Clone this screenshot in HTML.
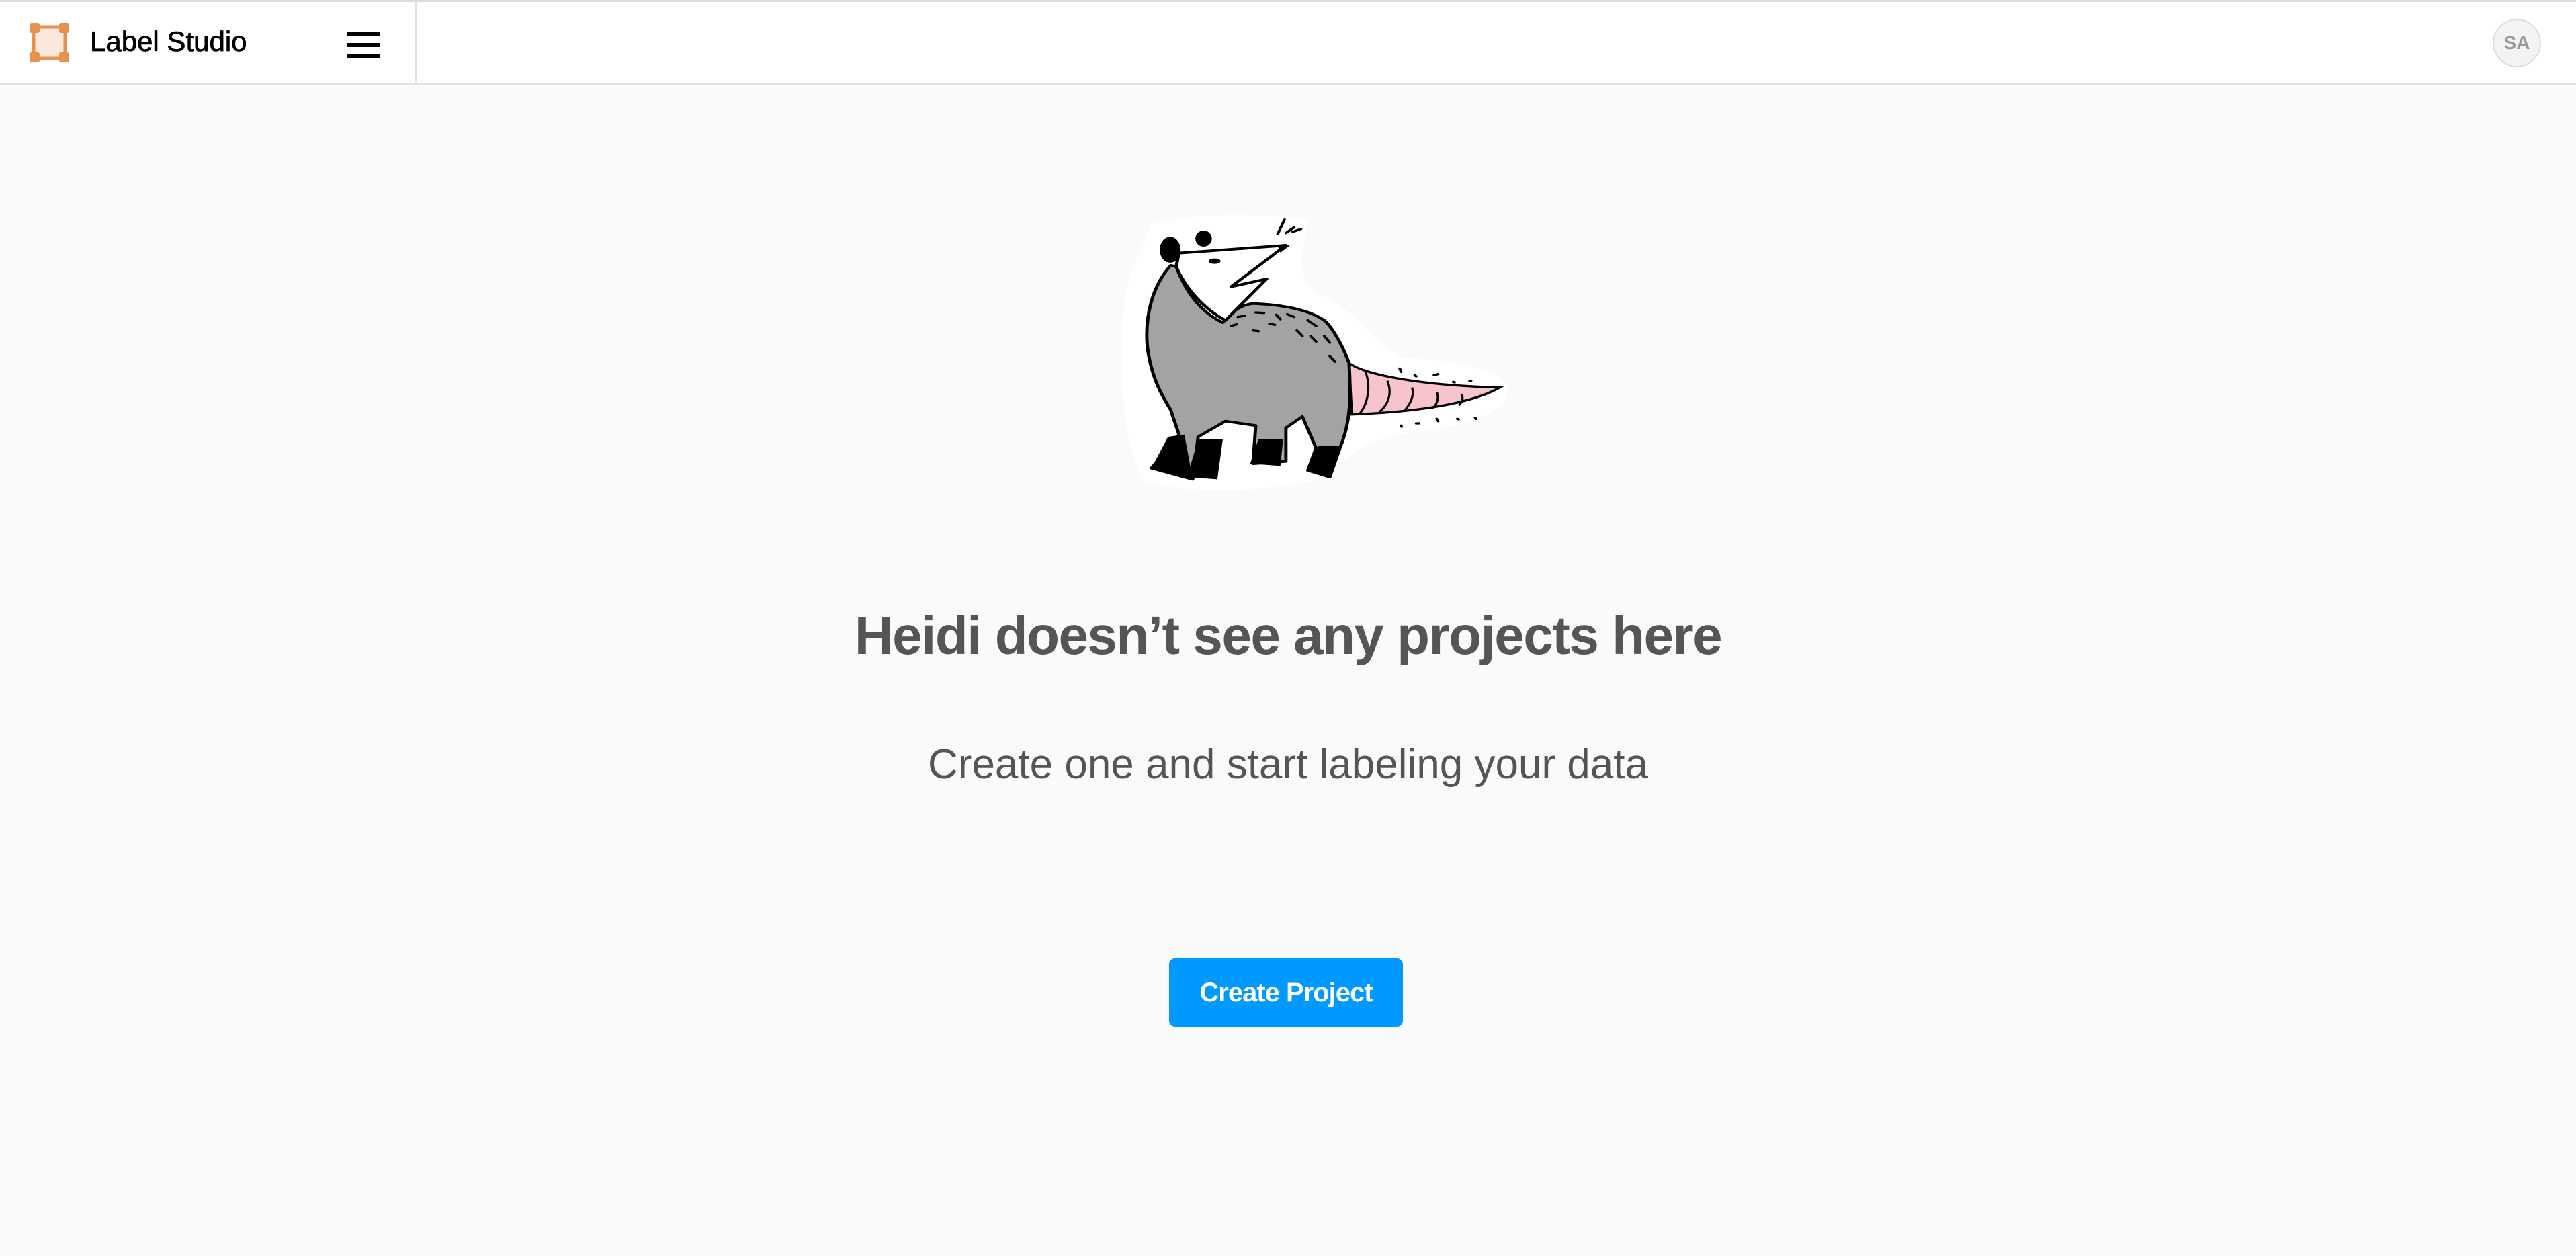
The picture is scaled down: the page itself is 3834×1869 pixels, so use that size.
<!DOCTYPE html>
<html><head><meta charset="utf-8"><style>
*{margin:0;padding:0;box-sizing:border-box}
html,body{width:3834px;height:1869px;overflow:hidden;background:#fafafa;font-family:"Liberation Sans",sans-serif}
.top{position:absolute;left:0;top:0;width:3834px;height:3px;background:#dcdcdc}
.hdr{position:absolute;left:0;top:3px;width:3834px;height:124px;background:#fff;border-bottom:3px solid #e3e3e3}
.div{position:absolute;left:618px;top:3px;width:3px;height:124px;background:#e3e3e3}
.logo{position:absolute;left:44px;top:34px}
.brand{position:absolute;left:134px;top:38px;font-size:42px;color:#000;-webkit-text-stroke:0.8px #000}
.ham{position:absolute;left:516px;top:48px;width:49px}
.ham i{display:block;height:6px;background:#000;margin-bottom:10px}
.av{position:absolute;left:3710px;top:28px;width:72px;height:72px;border-radius:50%;background:#f3f3f3;border:2px solid #ddd;color:#9a9a9a;font-weight:bold;font-size:28px;text-align:center;line-height:68px}
h1{position:absolute;left:0;width:3834px;top:900px;text-align:center;font-size:80px;font-weight:bold;color:#555;letter-spacing:-1.5px}
.sub{position:absolute;left:0;width:3834px;top:1102px;text-align:center;font-size:62px;color:#555}
.btn{position:absolute;left:1740px;top:1426px;width:348px;height:102px;border-radius:9px;background:#0099ff;color:#fff;font-size:40px;font-weight:bold;text-align:center;line-height:102px;letter-spacing:-1px}
</style></head><body>
<div class="top"></div>
<div class="hdr"></div>
<div class="div"></div>
<svg class="logo" width="59" height="59" viewBox="0 0 59 59"><rect x="6" y="6" width="47" height="47" fill="#fbe8dc" stroke="#e8924f" stroke-width="5"/><rect x="0" y="0" width="15" height="15" rx="3" fill="#e8924f"/><rect x="44" y="0" width="15" height="15" rx="3" fill="#e8924f"/><rect x="0" y="44" width="15" height="15" rx="3" fill="#e8924f"/><rect x="44" y="44" width="15" height="15" rx="3" fill="#e8924f"/></svg>
<div class="brand">Label Studio</div>
<div class="ham"><i></i><i></i><i></i></div>
<div class="av">SA</div>
<svg style="position:absolute;left:1620px;top:300px" width="640" height="450" viewBox="0 0 1568 1350" preserveAspectRatio="none">
<path d="M230 100 C400 40 700 60 800 80 C780 250 740 330 850 420 C1000 500 1050 650 1150 700 C1350 700 1530 760 1530 840 C1500 1000 1300 1000 1100 1050 C950 1100 900 1200 820 1250 C600 1300 350 1300 200 1250 C100 1000 100 500 160 300 Z" fill="#fff"/>
<path d="M950 720 C1000 770 1200 820 1500 830 C1400 900 1200 940 960 950 Z" fill="#f7c3cc" stroke="#000" stroke-width="10"/>
<g stroke="#000" stroke-width="8" fill="none"><path d="M1010 760 C1030 820 1020 900 990 945"/><path d="M1090 800 C1110 860 1090 910 1060 940"/><path d="M1180 830 C1190 870 1170 910 1150 935"/><path d="M1270 850 C1280 880 1270 910 1250 925"/><path d="M1360 860 C1370 880 1360 900 1350 910"/></g>
<path d="M300 285 C230 380 205 520 215 650 C230 790 270 870 300 930 L330 1040 L230 1190 L380 1240 L400 1050 L500 980 L610 1000 L600 1170 L720 1160 L720 1010 L780 960 L830 1100 L800 1200 L880 1230 L920 1090 C950 1000 960 900 950 720 C920 620 880 550 860 530 C800 480 700 460 600 455 C560 460 520 490 490 540 C420 500 360 420 320 290 Z" fill="#a3a3a3" stroke="#000" stroke-width="12" stroke-linejoin="round"/>
<g fill="#000"><path d="M290 1050 L350 1040 L380 1240 L230 1190 Z"/><path d="M400 1060 L490 1060 L470 1240 L360 1230 Z"/><path d="M620 1060 L710 1060 L700 1180 L590 1170 Z"/><path d="M840 1090 L915 1090 L880 1230 L800 1200 Z"/></g>
<path d="M330 230 L720 195 L520 380 L650 345 L500 530 C420 480 350 380 320 290 Z" fill="#fff" stroke="#000" stroke-width="12" stroke-linejoin="round"/>
<path d="M690 198 L735 195 L700 228 Z" fill="#000"/>
<ellipse cx="298" cy="215" rx="38" ry="58" fill="#000"/><ellipse cx="420" cy="165" rx="30" ry="36" fill="#000"/><ellipse cx="460" cy="266" rx="22" ry="12" fill="#000"/>
<g stroke="#000" stroke-width="10" stroke-linecap="round" fill="none"><path d="M690 145 L715 80"/><path d="M720 140 L750 115"/><path d="M745 135 L775 122"/><path d="M520 555 L540 548"/><path d="M600 575 L620 578"/><path d="M545 515 L570 510"/><path d="M610 495 L640 497"/><path d="M685 505 L700 525"/><path d="M725 503 L750 515"/><path d="M660 545 L680 550"/><path d="M760 575 L780 600"/><path d="M810 600 L830 625"/><path d="M860 600 L880 630"/><path d="M800 530 L830 555"/><path d="M880 690 L900 715"/><path d="M1135 745 L1140 760"/><path d="M1190 775 L1195 780"/><path d="M1260 775 L1275 770"/><path d="M1330 805 L1335 807"/><path d="M1390 800 L1395 800"/><path d="M1140 1000 L1142 1005"/><path d="M1195 990 L1205 990"/><path d="M1270 970 L1275 980"/><path d="M1345 970 L1350 972"/><path d="M1410 965 L1413 970"/></g>
</svg>
<h1>Heidi doesn’t see any projects here</h1>
<div class="sub">Create one and start labeling your data</div>
<div class="btn">Create Project</div>
</body></html>
